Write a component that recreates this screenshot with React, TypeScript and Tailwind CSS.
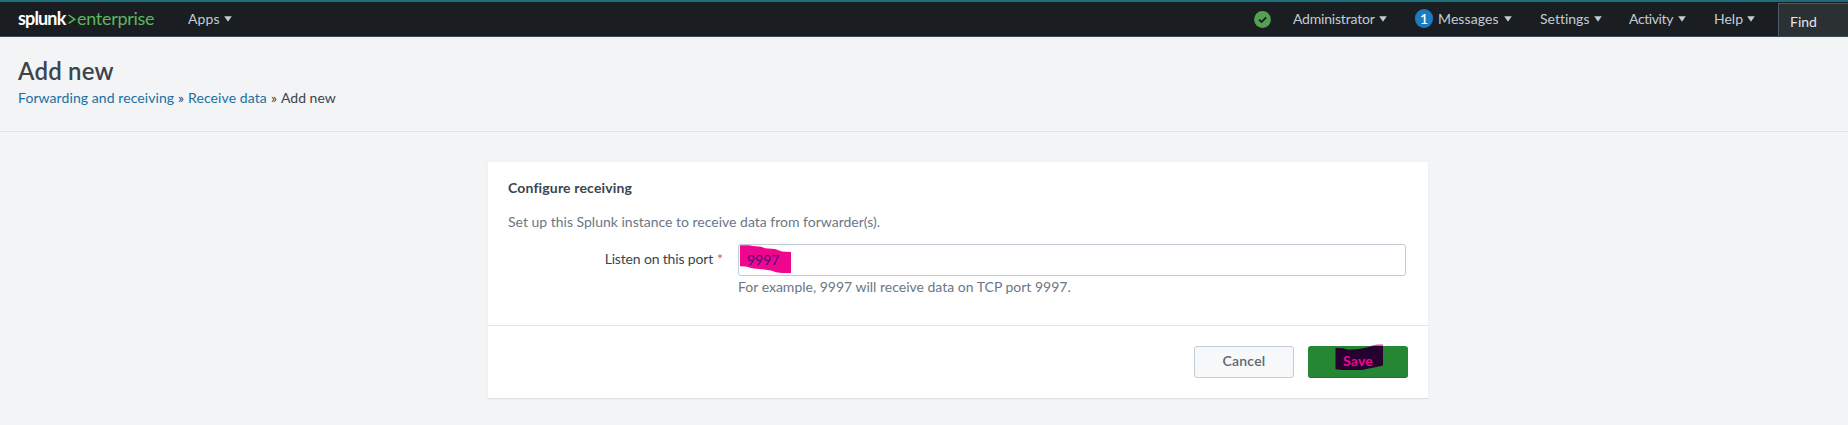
import type { ReactNode } from "react";

function Caret() {
  return (
    <svg width="8" height="6" viewBox="0 0 8 6" className="shrink-0" fill="currentColor">
      <path d="M0.2 0.3h7.6L4 5.7z" />
    </svg>
  );
}

function MenuItem({ className, children }: { className: string; children: ReactNode }) {
  return (
    <button className={`flex h-full shrink-0 items-center justify-between pb-px whitespace-nowrap ${className}`}>
      {children}
      <Caret />
    </button>
  );
}

function Logo() {
  return (
    <a className="flex h-8 w-[170px] shrink-0 items-center whitespace-nowrap text-[18px] leading-8">
      <span className="w-[50px] font-bold tracking-[-0.85px] text-white">splunk</span>
      <svg width="9" height="12" viewBox="0 0 9 12" className="mt-[3px] shrink-0" fill="none" stroke="#5cb65a" strokeWidth="1.5">
        <path d="M0.6 1L6.8 5.2L0.6 9.4" />
      </svg>
      <span className="tracking-[-0.3px] text-[#5cb65a]">enterprise</span>
    </a>
  );
}

function TopBar() {
  return (
    <header className="flex h-[37px] border-t-2 border-b border-t-[#1c6f7a] border-b-[#3c4a55] bg-[#1a1e22] pl-[18px] text-[#c3cbd4]">
      <Logo />
      <MenuItem className="w-[44px]">
        <span className="pb-px tracking-[0.1px]">Apps</span>
      </MenuItem>
      <div className="ml-auto flex h-full items-center">
        <svg width="17" height="17" viewBox="0 0 17 17" className="mr-[22px] shrink-0">
          <circle cx="8.5" cy="8.5" r="8.4" fill="#53a051" />
          <path d="M5 8.7L7.6 11L12.2 6.3" fill="none" stroke="#1a1e22" strokeWidth="1.8" />
        </svg>
        <MenuItem className="mr-[28px] w-[94px]">
          <span className="pb-px tracking-[-0.2px]">Administrator</span>
        </MenuItem>
        <MenuItem className="mr-[28px] w-[97px]">
          <span className="flex items-center gap-[5px]">
            <span className="flex h-[19px] w-[18px] items-center justify-center rounded-full bg-[#1a7bbf] font-semibold text-white">1</span>
            <span className="pb-px tracking-[0.1px]">Messages</span>
          </span>
        </MenuItem>
        <MenuItem className="mr-[27px] w-[62px]">
          <span className="pb-px">Settings</span>
        </MenuItem>
        <MenuItem className="mr-[28px] w-[57px]">
          <span className="pb-px tracking-[-0.4px]">Activity</span>
        </MenuItem>
        <MenuItem className="mr-[23px] w-[41px]">
          <span className="pb-px">Help</span>
        </MenuItem>
        <div className="mt-px flex h-[33px] w-[70px] items-center border border-r-0 border-b-0 border-[#4d5964] bg-[#2b3033] pt-[2px] pl-[11px] text-[#e1e6eb]">
          <span>Find</span>
        </div>
      </div>
    </header>
  );
}

function PageHeader() {
  return (
    <section className="h-[95px] border-b border-[#dfe3e6] pt-[20px] pl-[18px]">
      <h1 className="text-[24px] leading-[28px] font-semibold tracking-[0.2px] text-[#3c444d]">Add new</h1>
      <nav className="mt-[3px] flex h-5 items-center leading-5 whitespace-nowrap">
        <a className="w-[160px] tracking-[0.08px] text-[#1b6fa3]">Forwarding and receiving</a>
        <span className="w-[10px]">»</span>
        <a className="w-[83px] tracking-[0.1px] text-[#1b6fa3]">Receive data</a>
        <span className="w-[10px]">»</span>
        <span>Add new</span>
      </nav>
    </section>
  );
}

function ReceivingForm() {
  return (
    <main className="mt-[30px] ml-[488px] h-[236px] w-[940px] bg-white shadow-[0_1px_1px_#dce0e4]">
      <div className="h-[163px] px-5 pt-[16px]">
        <h2 className="leading-5 font-bold tracking-[0.16px]">Configure receiving</h2>
        <p className="mt-[14px] leading-5 text-[#6b7785]">
          Set up this Splunk instance to receive data from forwarder(s).
        </p>
        <div className="mt-[12px] flex">
          <label className="flex h-8 w-[230px] items-center justify-end gap-1 pr-[15px] pb-[3px]">
            <span className="tracking-[-0.16px]">Listen on this port</span>
            <span className="text-[#c9605c]">*</span>
          </label>
          <div>
            <div className="relative flex h-8 w-[668px] items-center rounded-[3px] border border-[#c3cbd4] pb-[2px] pl-2">
              <svg width="51" height="29" viewBox="0 0 51 29" className="absolute top-0 left-px">
                <path d="M0 0.3H9L13 1L21 1.7L25 3.2L35 4L42 6.4L51 7V28H42L36 27.3L31 25.4L24 24.6L12 23.2L6 21.5L0 21.3z" fill="#f0058f" />
              </svg>
              <span className="relative text-[#4a0c78]">9997</span>
            </div>
            <p className="mt-[1px] leading-5 text-[#6b7785]">For example, 9997 will receive data on TCP port 9997.</p>
          </div>
        </div>
      </div>
      <footer className="flex h-[73px] justify-end gap-[14px] border-t border-[#dfe4e8] pt-5 pr-5 font-semibold">
        <button className="h-8 w-[100px] rounded-[3px] border border-[#c3cbd4] bg-[#f7f8fa] pb-[4px] tracking-[0.2px] text-[#5c6773]">Cancel</button>
        <button className="relative flex h-8 w-[100px] items-center justify-center rounded-[3px] border-b border-[#1f6e2d] bg-[#258733] pb-[3px]">
          <svg width="48" height="27" viewBox="0 0 48 27" className="absolute top-[-2px] left-[27px]">
            <path d="M37 1.5L42 0.5H48V3H34z" fill="#f0459e" />
            <path d="M0.5 4L8 4.3L13 5.7L22 5.3L31 3.8L37 2H48V21.5L40 23.2L27 26H7L0.5 25.2z" fill="#26002f" />
          </svg>
          <span className="relative font-bold tracking-[0.2px] text-[#f0058f]">Save</span>
        </button>
      </footer>
    </main>
  );
}

export default function App() {
  return (
    <div className="h-[425px] w-[1848px] overflow-hidden bg-[#f2f4f5] font-['Lato','Liberation_Sans',sans-serif] text-[14px] text-[#3c444d] [font-variant-ligatures:none]">
      <TopBar />
      <PageHeader />
      <ReceivingForm />
    </div>
  );
}
